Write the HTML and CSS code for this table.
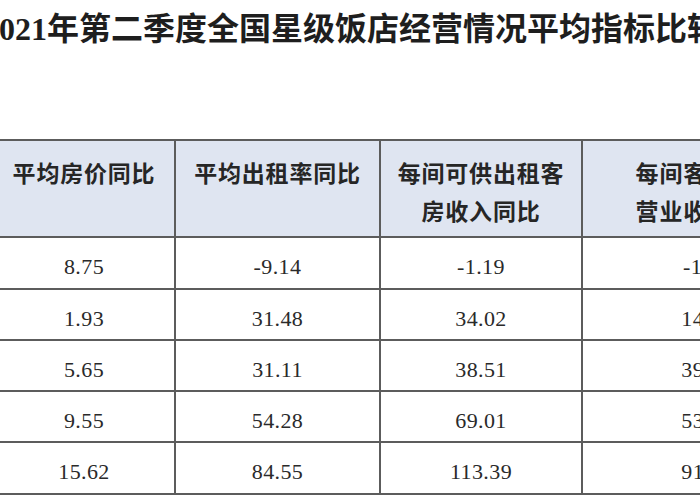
FILE: index.html
```html
<!DOCTYPE html>
<html lang="zh-CN">
<head>
<meta charset="utf-8">
<title>2021年第二季度全国星级饭店经营情况平均指标比较</title>
<link rel="stylesheet" href="styles.css">
</head>
<body>
<div class="page">
  <h1 class="title">2021年第二季度全国星级饭店经营情况平均指标比较</h1>
  <div class="table">
    <div class="cell head">平均房价同比</div>
    <div class="cell head">平均出租率同比</div>
    <div class="cell head">每间可供出租客<br>房收入同比</div>
    <div class="cell head">每间客房平摊<br>营业收入同比</div>

    <div class="cell num">8.75</div>
    <div class="cell num">-9.14</div>
    <div class="cell num">-1.19</div>
    <div class="cell num">-1.92</div>

    <div class="cell num">1.93</div>
    <div class="cell num">31.48</div>
    <div class="cell num">34.02</div>
    <div class="cell num">14.37</div>

    <div class="cell num">5.65</div>
    <div class="cell num">31.11</div>
    <div class="cell num">38.51</div>
    <div class="cell num">39.06</div>

    <div class="cell num">9.55</div>
    <div class="cell num">54.28</div>
    <div class="cell num">69.01</div>
    <div class="cell num">53.84</div>

    <div class="cell num">15.62</div>
    <div class="cell num">84.55</div>
    <div class="cell num">113.39</div>
    <div class="cell num">91.23</div>
  </div>
</div>
</body>
</html>
```
FILE: styles.css
```css
html, body {
  margin: 0;
  padding: 0;
  background: #ffffff;
  overflow: hidden;
  width: 700px;
  height: 500px;
}

.page {
  width: 700px;
  height: 500px;
  overflow: hidden;
  color: #222222;
}

.title {
  margin: 9px 0 0 -17px;
  height: 40px;
  line-height: 40px;
  font-family: "Liberation Serif", "Noto Sans CJK SC", serif;
  font-size: 32px;
  font-weight: 700;
  white-space: nowrap;
  color: #1e1e1e;
}

.table {
  display: grid;
  grid-template-columns: 182px 205px 202px 250px;
  grid-template-rows: 97px 52px 51px 51px 51px 52px;
  width: max-content;
  margin: 90px 0 0 -8px;
  border-top: 2px solid #5c5c5c;
  border-left: 2px solid #5c5c5c;
}

.cell {
  box-sizing: border-box;
  border-right: 2px solid #5c5c5c;
  border-bottom: 2px solid #5c5c5c;
  text-align: center;
  white-space: nowrap;
}

.head {
  background: #dfe5f1;
  font-family: "Noto Sans CJK SC", sans-serif;
  font-weight: 700;
  font-size: 23px;
  letter-spacing: 0.8px;
  line-height: 38px;
  padding-top: 12px;
  color: #262626;
}

.num {
  display: flex;
  align-items: center;
  justify-content: center;
  padding-top: 8px;
  font-family: "Liberation Serif", serif;
  font-size: 22px;
  letter-spacing: 0.4px;
  color: #2a2a2a;
}
```
